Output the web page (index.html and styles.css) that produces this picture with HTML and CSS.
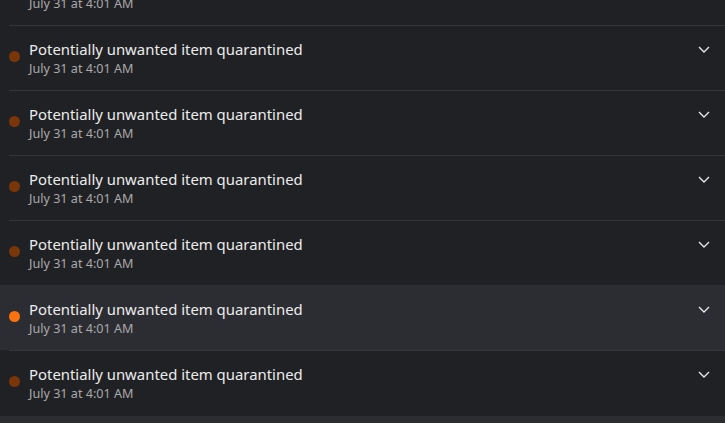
FILE: index.html
```html
<!DOCTYPE html>
<html>
<head>
<meta charset="utf-8">
<link rel="stylesheet" href="styles.css">
</head>
<body>
<div class="list">
  <div class="row"><div class="inner"><span class="dot"></span><div class="text"><div class="title">Potentially unwanted item quarantined</div><div class="date">July 31 at 4:01 AM</div></div><svg class="chev" viewBox="0 0 12 7" width="12" height="7"><path d="M1 1 L6 6 L11 1" fill="none" stroke="#e6e6e6" stroke-width="1.4"/></svg></div></div>
  <div class="row"><div class="inner"><span class="dot"></span><div class="text"><div class="title">Potentially unwanted item quarantined</div><div class="date">July 31 at 4:01 AM</div></div><svg class="chev" viewBox="0 0 12 7" width="12" height="7"><path d="M1 1 L6 6 L11 1" fill="none" stroke="#e6e6e6" stroke-width="1.4"/></svg></div></div>
  <div class="row"><div class="inner"><span class="dot"></span><div class="text"><div class="title">Potentially unwanted item quarantined</div><div class="date">July 31 at 4:01 AM</div></div><svg class="chev" viewBox="0 0 12 7" width="12" height="7"><path d="M1 1 L6 6 L11 1" fill="none" stroke="#e6e6e6" stroke-width="1.4"/></svg></div></div>
  <div class="row"><div class="inner"><span class="dot"></span><div class="text"><div class="title">Potentially unwanted item quarantined</div><div class="date">July 31 at 4:01 AM</div></div><svg class="chev" viewBox="0 0 12 7" width="12" height="7"><path d="M1 1 L6 6 L11 1" fill="none" stroke="#e6e6e6" stroke-width="1.4"/></svg></div></div>
  <div class="row"><div class="inner"><span class="dot"></span><div class="text"><div class="title">Potentially unwanted item quarantined</div><div class="date">July 31 at 4:01 AM</div></div><svg class="chev" viewBox="0 0 12 7" width="12" height="7"><path d="M1 1 L6 6 L11 1" fill="none" stroke="#e6e6e6" stroke-width="1.4"/></svg></div></div>
  <div class="row active"><div class="inner"><span class="dot"></span><div class="text"><div class="title">Potentially unwanted item quarantined</div><div class="date">July 31 at 4:01 AM</div></div><svg class="chev" viewBox="0 0 12 7" width="12" height="7"><path d="M1 1 L6 6 L11 1" fill="none" stroke="#e6e6e6" stroke-width="1.4"/></svg></div></div>
  <div class="row"><div class="inner"><span class="dot"></span><div class="text"><div class="title">Potentially unwanted item quarantined</div><div class="date">July 31 at 4:01 AM</div></div><svg class="chev" viewBox="0 0 12 7" width="12" height="7"><path d="M1 1 L6 6 L11 1" fill="none" stroke="#e6e6e6" stroke-width="1.4"/></svg></div></div>
</div>
<div class="footer"></div>
</body>
</html>
```
FILE: styles.css
```css
html, body {
  margin: 0;
  padding: 0;
  background: #202124;
  height: 100%;
  overflow: hidden;
}
body {
  font-family: "Noto Sans", "Open Sans", sans-serif;
}
.list {
  margin-top: -40px;
}
.row {
  padding-left: 9px;
}
.row.active {
  background: #2c2d32;
}
.inner {
  display: flex;
  align-items: flex-start;
  border-top: 1px solid #343539;
  height: 64px;
  padding-right: 15px;
}
.row.active .inner {
  border-top-color: #2c2d32;
}
.dot {
  flex: none;
  width: 11px;
  height: 11px;
  border-radius: 50%;
  background: #7a3608;
  margin-top: 25px;
}
.row.active .dot {
  background: #f9720d;
}
.text {
  flex: 1;
  margin-left: 9px;
  padding-top: 13px;
}
.title {
  font-size: 14.9px;
  line-height: 20px;
  color: #ececec;
}
.date {
  font-size: 12.6px;
  line-height: 20px;
  color: #a9a9ab;
}
.chev {
  flex: none;
  margin-top: 20px;
}
.footer {
  height: 20px;
  margin-top: 1px;
  background: #2c2d31;
}
```
